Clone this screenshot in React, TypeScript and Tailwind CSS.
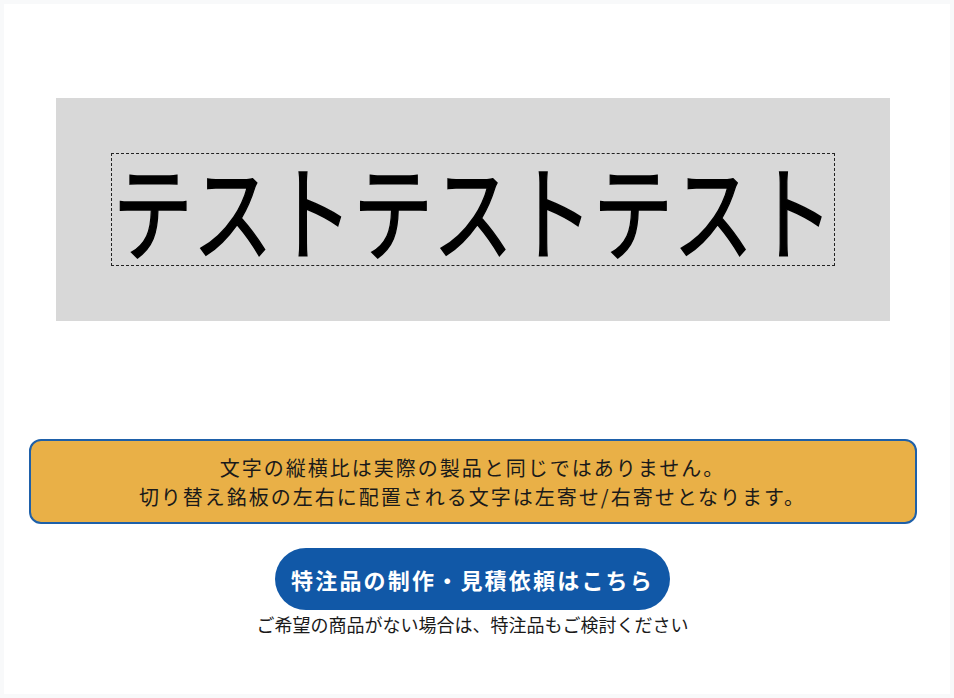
const JP = "font-['Noto_Sans_CJK_JP','Noto_Sans',sans-serif]";

export default function App() {
  return (
    <div className={`h-[698px] w-[954px] bg-[#f8f9fa] p-1 ${JP}`}>
      <div className="flex h-full flex-col items-center bg-white pr-[9px]">
        {/* preview plate */}
        <div className="mt-[94px] flex h-[223px] w-[834px] items-center justify-center bg-[#d8d8d8]">
          <div className="flex h-[113px] w-[724px] items-center justify-center border border-dashed border-[#222]">
            <span className="inline-block translate-y-[-2px] scale-x-[0.77] whitespace-nowrap text-[104px] leading-none font-normal text-black [-webkit-text-stroke:1.6px_#000]">
              テストテストテスト
            </span>
          </div>
        </div>

        {/* notice */}
        <div className="mt-[118px] flex h-[85px] w-[888px] flex-col items-center justify-center rounded-xl border-2 border-[#1e60a9] bg-[#e9b047] text-[20px] leading-[29px] tracking-[0.1em] text-[#1a1a1a]">
          <p>文字の縦横比は実際の製品と同じではありません。</p>
          <p>切り替え銘板の左右に配置される文字は左寄せ/右寄せとなります。</p>
        </div>

        <button className="mt-6 flex h-[62px] w-[395px] items-center justify-center rounded-full bg-[#1158a7] text-[22px] font-bold tracking-[0.1em] text-white">
          特注品の制作・見積依頼はこちら
        </button>
        <p className="mt-px text-[18px] leading-[26px] text-[#1a1a1a]">ご希望の商品がない場合は、特注品もご検討ください</p>
      </div>
    </div>
  );
}
